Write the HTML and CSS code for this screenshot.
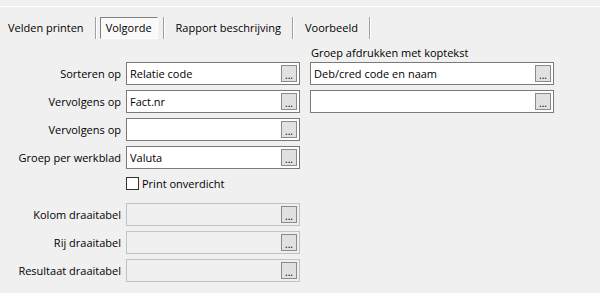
FILE: index.html
```html
<!DOCTYPE html>
<html lang="nl">

<head>
    <meta charset="UTF-8">
    <title>Volgorde</title>
    <link rel="stylesheet" href="styles.css">
</head>

<body>
    <div class="top_line"></div>

    <nav class="tabs">
        <span class="tab first">Velden printen</span>
        <span class="tab_sep"></span>
        <span class="tab active">Volgorde</span>
        <span class="tab_sep"></span>
        <span class="tab">Rapport beschrijving</span>
        <span class="tab_sep"></span>
        <span class="tab">Voorbeeld</span>
        <span class="tab_sep"></span>
    </nav>

    <form class="order_form" name="orderForm">
        <span></span>
        <span></span>
        <span class="group_title">Groep afdrukken met koptekst</span>

        <label class="field_label" for="sort1">Sorteren op</label>
        <div class="field"><input type="text" id="sort1" value="Relatie code"><button type="button">...</button></div>
        <div class="field"><input type="text" id="group1" value="Deb/cred code en naam"><button type="button">...</button></div>

        <label class="field_label" for="sort2">Vervolgens op</label>
        <div class="field"><input type="text" id="sort2" value="Fact.nr"><button type="button">...</button></div>
        <div class="field"><input type="text" id="group2" value=""><button type="button">...</button></div>

        <label class="field_label" for="sort3">Vervolgens op</label>
        <div class="field"><input type="text" id="sort3" value=""><button type="button">...</button></div>
        <span></span>

        <label class="field_label" for="sheet">Groep per werkblad</label>
        <div class="field"><input type="text" id="sheet" value="Valuta"><button type="button">...</button></div>
        <span></span>

        <span></span>
        <div class="check_row">
            <input type="checkbox" id="condensed">
            <label for="condensed">Print onverdicht</label>
        </div>
        <span></span>

        <label class="field_label" for="pivotCol">Kolom draaitabel</label>
        <div class="field disabled"><input type="text" id="pivotCol" disabled><button type="button">...</button></div>
        <span></span>

        <label class="field_label" for="pivotRow">Rij draaitabel</label>
        <div class="field disabled"><input type="text" id="pivotRow" disabled><button type="button">...</button></div>
        <span></span>

        <label class="field_label" for="pivotRes">Resultaat draaitabel</label>
        <div class="field disabled"><input type="text" id="pivotRes" disabled><button type="button">...</button></div>
        <span></span>
    </form>
</body>

</html>
```

FILE: styles.css
```css
body {
    margin: 0;
    background: #f0f0f0;
    font-family: "Open Sans", "Noto Sans", sans-serif;
    font-size: 11px;
    color: #000;
}

.top_line {
    margin-top: 6px;
    border-top: 1px solid #ffffff;
}

.tabs {
    display: flex;
    align-items: center;
    height: 22px;
    margin-top: 10px;
}

.tab {
    padding: 0 11px;
    line-height: 22px;
}

.tab.first {
    padding-left: 8px;
}

.tab.active {
    margin: 0 5px 0 3px;
    padding: 0 5px;
    line-height: 20px;
    border: 1px solid;
    border-color: #808080 #ffffff #ffffff #808080;
    background: #f9f9f9;
}

.tab_sep {
    width: 1px;
    height: 22px;
    background: #a0a0a0;
    border-right: 1px solid #ffffff;
}

.order_form {
    display: grid;
    grid-template-columns: 126px 184px 244px;
    row-gap: 5px;
    margin-top: 7px;
}

.group_title {
    line-height: 14px;
    margin-bottom: -3px;
    padding-left: 1px;
}

.field_label {
    padding-right: 5px;
    text-align: right;
    line-height: 23px;
    white-space: nowrap;
}

.field {
    display: flex;
    align-items: center;
    height: 23px;
    box-sizing: border-box;
    border: 1px solid #7a7a7a;
    background: #ffffff;
}

.order_form > .field:nth-child(3n+2) {
    width: 174px;
}

.field input {
    flex: 1;
    min-width: 0;
    border: none;
    outline: none;
    padding: 0 3px;
    background: transparent;
    font: inherit;
    color: #000;
}

.field button {
    width: 16px;
    height: 17px;
    margin-right: 2px;
    padding: 0;
    box-sizing: border-box;
    border: 1px solid #8a8a8a;
    background: #e1e1e1;
    font: inherit;
    font-size: 10px;
    line-height: 18px;
    color: #000;
}

.field.disabled {
    border-color: #c2c2c2;
    background: #f0f0f0;
}

.check_row {
    display: flex;
    align-items: center;
    gap: 3px;
    height: 18px;
    margin-bottom: 6px;
}

.check_row input {
    appearance: none;
    width: 13px;
    height: 13px;
    margin: 0;
    border: 1px solid #333333;
    background: #ffffff;
}
```
